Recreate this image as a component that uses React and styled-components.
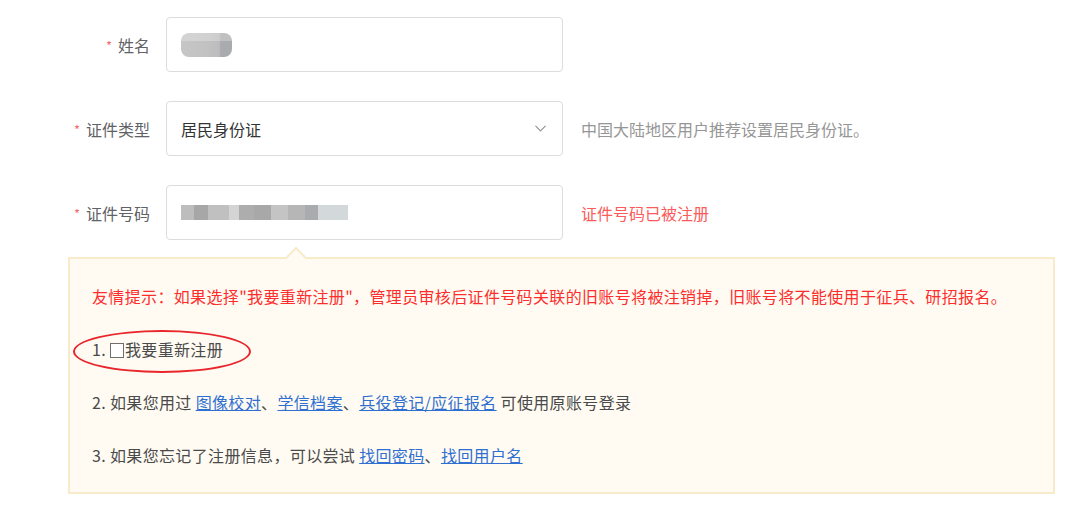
import React from "react";
import styled, { createGlobalStyle } from "styled-components";
import { ChevronDown } from "lucide-react";

const GlobalStyle = createGlobalStyle`
    body {
        margin: 0;
        background: #ffffff;
        font-family: "Noto Sans CJK SC", "Noto Sans", sans-serif;
    }
`;

const App = () => {
    return (
        <Page>
            <GlobalStyle />
            <Form>
                <Row>
                    <Label><Star>*</Star>姓名</Label>
                    <Field>
                        <NameMask />
                    </Field>
                </Row>
                <Row>
                    <Label><Star>*</Star>证件类型</Label>
                    <Field>
                        <Value>居民身份证</Value>
                        <ChevronDown size={19} strokeWidth={1.4} color="#8f8f8f" />
                    </Field>
                    <Hint>中国大陆地区用户推荐设置居民身份证。</Hint>
                </Row>
                <Row>
                    <Label><Star>*</Star>证件号码</Label>
                    <Field>
                        <IdMask />
                    </Field>
                    <Hint $error>证件号码已被注册</Hint>
                </Row>
            </Form>

            <TipBox>
                <Arrow />
                <TipLine $red>友情提示：如果选择"我要重新注册"，管理员审核后证件号码关联的旧账号将被注销掉，旧账号将不能使用于征兵、研招报名。</TipLine>
                <TipLine>1. <Check />我要重新注册</TipLine>
                <TipLine>
                    2. 如果您用过 <TipLink>图像校对</TipLink>、<TipLink>学信档案</TipLink>、<TipLink>兵役登记/应征报名</TipLink> 可使用原账号登录
                </TipLine>
                <TipLine>
                    3. 如果您忘记了注册信息，可以尝试 <TipLink>找回密码</TipLink>、<TipLink>找回用户名</TipLink>
                </TipLine>
                <Circle />
            </TipBox>
        </Page>
    );
};

const Page = styled.div`
    width: 1080px;
    height: 513px;
    padding-top: 17px;
    box-sizing: border-box;
    overflow: hidden;
`;

const Form = styled.div`
    display: flex;
    flex-direction: column;
    gap: 29px;
`;

const Row = styled.div`
    display: flex;
    align-items: center;
    gap: 18px;
`;

const Label = styled.div`
    width: 150px;
    margin-right: -2px;
    text-align: right;
    font-size: 16px;
    color: #5f6266;
`;

const Star = styled.span`
    color: #f56c6c;
    font-size: 13px;
    margin-right: 6px;
    vertical-align: 1px;
`;

const Field = styled.div`
    width: 397px;
    height: 55px;
    box-sizing: border-box;
    border: 1px solid #dcdde0;
    border-radius: 4px;
    display: flex;
    align-items: center;
    justify-content: space-between;
    padding: 0 12px 0 14px;
    background: #fff;
`;

const Value = styled.span`
    font-size: 16px;
    color: #333;
`;

const NameMask = styled.div`
    width: 51px;
    height: 24px;
    border-radius: 8px;
    background:
        linear-gradient(180deg, rgba(255, 255, 255, 0.25) 0 35%, rgba(255, 255, 255, 0) 35% 100%),
        linear-gradient(90deg, #c6c6c6 0%, #c2c2c2 50%, #bcbcbc 75%, #a9abae 78%, #a9abae 100%);
    filter: blur(0.6px);
`;

const IdMask = styled.div`
    width: 167px;
    height: 15px;
    background: linear-gradient(90deg,
        #bdbdbd 0 8%, #a7a7a7 8% 16%, #c0c0c0 16% 29%, #d4d4d4 29% 35%,
        #adadad 35% 44%, #a8a8a8 44% 54%, #c4c4c4 54% 64%, #b6b6b6 64% 74%,
        #a9abae 74% 82%, #d3d8db 82% 100%);
    filter: blur(0.4px);
`;

const Hint = styled.div`
    font-size: 16px;
    color: ${(p) => (p.$error ? "#fb5b5b" : "#969696")};
`;

const TipBox = styled.div`
    position: relative;
    margin: 17px 0 0 68px;
    width: 987px;
    box-sizing: border-box;
    border: 2px solid #f7ebca;
    background: #fffbf2;
    padding: 11px 22px 10px;
`;

const Arrow = styled.div`
    position: absolute;
    top: -9px;
    left: 218px;
    width: 14px;
    height: 14px;
    background: #fffbf2;
    border-top: 2px solid #f7ebca;
    border-left: 2px solid #f7ebca;
    transform: rotate(45deg);
`;

const TipLine = styled.div`
    height: 53px;
    line-height: 53px;
    font-size: 16px;
    letter-spacing: 0.35px;
    white-space: nowrap;
    color: ${(p) => (p.$red ? "#fd2d2d" : "#4a4a4a")};
`;

const TipLink = styled.a`
    color: #2f6fd0;
    text-decoration: underline;
    cursor: pointer;
`;

const Check = styled.span`
    display: inline-block;
    width: 12px;
    height: 13px;
    margin: 0 1px 0 0;
    border: 1px solid #6f6f6f;
    background: #fff;
    vertical-align: -2px;
`;

const Circle = styled.div`
    position: absolute;
    left: 3px;
    top: 71px;
    width: 174px;
    height: 39px;
    border: 2.5px solid #e8262b;
    border-radius: 50%;
    pointer-events: none;
`;

export default App;
